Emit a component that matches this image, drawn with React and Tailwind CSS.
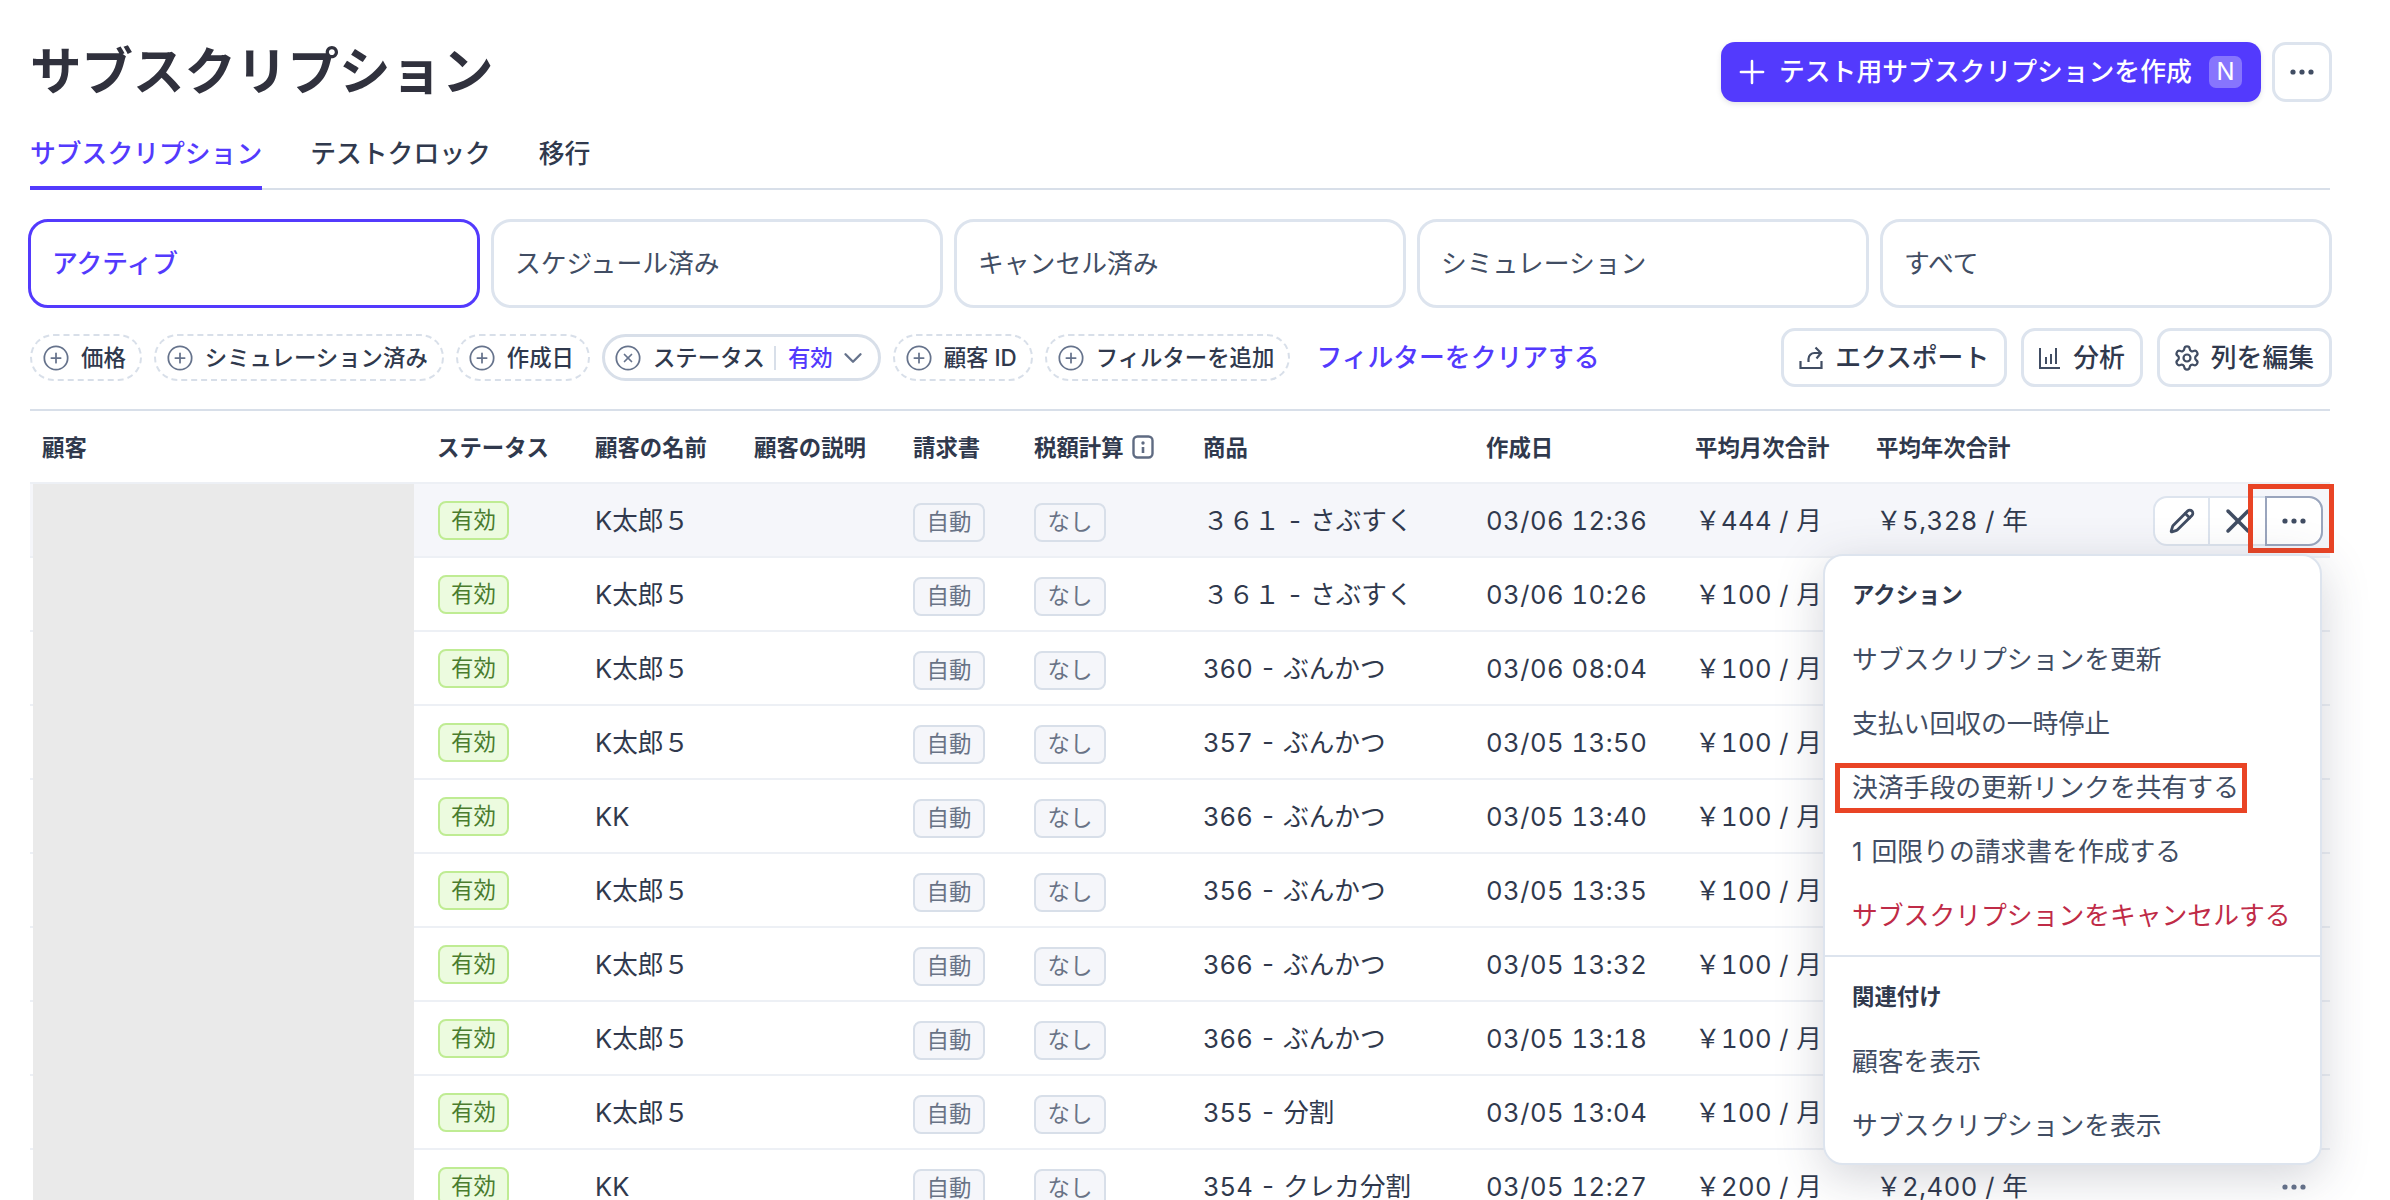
import React from "react";
import { ChevronDown, CirclePlus, CircleX, Pencil, Plus, Settings, X } from "lucide-react";

const COLS = "grid grid-cols-[408px_157px_159px_159px_121px_169px_283px_209px_181px_1fr]";

// the year column of rows 2-9 sits behind the open menu
const ROWS = [
  ["K太郎５", "３６１ - さぶすく", "03/06 12:36", "￥444", "￥5,328"],
  ["K太郎５", "３６１ - さぶすく", "03/06 10:26", "￥100"],
  ["K太郎５", "360 - ぶんかつ", "03/06 08:04", "￥100"],
  ["K太郎５", "357 - ぶんかつ", "03/05 13:50", "￥100"],
  ["KK", "366 - ぶんかつ", "03/05 13:40", "￥100"],
  ["K太郎５", "356 - ぶんかつ", "03/05 13:35", "￥100"],
  ["K太郎５", "366 - ぶんかつ", "03/05 13:32", "￥100"],
  ["K太郎５", "366 - ぶんかつ", "03/05 13:18", "￥100"],
  ["K太郎５", "355 - 分割", "03/05 13:04", "￥100"],
  ["KK", "354 - クレカ分割", "03/05 12:27", "￥200", "￥2,400"],
];

function Dots({ className }) {
  return (
    <svg viewBox="0 0 24 6" className={"h-[6px] w-[24px] " + (className || "")} fill="currentColor">
      <circle cx="3" cy="3" r="2.6" />
      <circle cx="12" cy="3" r="2.6" />
      <circle cx="21" cy="3" r="2.6" />
    </svg>
  );
}

function ShareIcon() {
  return (
    <svg width="24" height="24" viewBox="0 0 24 24" fill="none" stroke="currentColor" strokeWidth="2.2" className="text-[#414d63]">
      <path d="M1.5 15v7h21v-7" />
      <path d="M9.5 16v-3a6 6 0 0 1 6-6h6.5" />
      <path d="M16.5 1.5L22 7l-4.5 5.5" />
    </svg>
  );
}

function ChartIcon() {
  return (
    <svg width="22" height="24" viewBox="0 0 22 24" fill="none" stroke="currentColor" strokeWidth="2" className="text-[#414d63]">
      <path d="M1 2v20h20" />
      <path d="M7 11v7" />
      <path d="M12 8v10" />
      <path d="M17 2v16" />
    </svg>
  );
}

function InfoIcon() {
  return (
    <svg width="22" height="24" viewBox="0 0 22 24" fill="none" className="ml-[8px] text-[#5f6b82]">
      <rect x="1.5" y="1.5" width="19" height="21" rx="4" stroke="currentColor" strokeWidth="2.4" />
      <circle cx="11" cy="8" r="1.7" fill="currentColor" />
      <path d="M11 12v6" stroke="currentColor" strokeWidth="2.6" />
    </svg>
  );
}

function AddPill({ label }) {
  return (
    <div className="flex h-[47px] items-center gap-[11px] rounded-full border-2 border-dashed border-[#d8dfe9] pl-[10px] pr-[14px] text-[22.4px] font-medium text-[#30394d]">
      <CirclePlus size={28} strokeWidth={1.5} className="text-[#66738c]" />
      <span>{label}</span>
    </div>
  );
}

function ToolButton({ icon, label }) {
  return (
    <div className="flex h-[59px] items-center gap-[12px] rounded-[14px] border-[3px] border-[#dde4ee] px-[15px] text-[25.8px] font-medium text-[#30394d]">
      {icon}
      <span className="pt-[2px]">{label}</span>
    </div>
  );
}

function MenuItem({ children, className = "" }) {
  return <div className={"flex h-[64px] items-center pl-[27px] pt-[2px] text-[25.8px] text-[#414d63] " + className}>{children}</div>;
}

function MenuHeading({ children }) {
  return <div className="flex h-[64px] items-center pl-[27px] text-[22.4px] font-bold text-[#30394d]">{children}</div>;
}

function Row({ row, index }) {
  const first = index === 0;
  return (
    <div className={COLS + " h-[74px] items-center border-b-2 border-[#edf0f5] text-[25.6px] tabular-nums text-[#30394d] " + (first ? "bg-[#f5f6fa]" : "")}>
      <div className="ml-[3px] h-[74px] w-[381px] self-start bg-[#eaeaea]" />
      <div>
        <span className="-mt-[2px] flex h-[39px] w-[71px] items-center justify-center rounded-[8px] border-2 border-[#bfec93] bg-[#ecfbdf] text-[22.4px] text-[#4a7c2e]">有効</span>
      </div>
      <div>{row[0]}</div>
      <div />
      <div>
        <span className="mt-[2px] flex h-[39px] w-[72px] items-center justify-center rounded-[8px] border-2 border-[#d8dfe9] bg-[#f5f6fa] text-[22.4px] text-[#697386]">自動</span>
      </div>
      <div>
        <span className="mt-[2px] flex h-[39px] w-[72px] items-center justify-center rounded-[8px] border-2 border-[#d8dfe9] bg-[#f5f6fa] text-[22.4px] text-[#697386]">なし</span>
      </div>
      <div>{row[1]}</div>
      <div className="tracking-[0.5px]">{row[2]}</div>
      <div className="tracking-[0.4px]">{row[3]} / 月</div>
      <div className="flex items-center justify-between pr-[7px]">
        {row[4] ? <span className="tracking-[0.5px]">{row[4]} / 年</span> : <span />}
        {first && (
          <div className="flex h-[50px] w-[170px] rounded-[14px] border-2 border-[#dde4ee] bg-white text-[#414d63]">
            <div className="flex w-[55px] items-center justify-center border-r-2 border-[#dde4ee]">
              <Pencil size={26} strokeWidth={2.6} />
            </div>
            <div className="flex w-[55px] items-center justify-center">
              <X size={40} strokeWidth={2.1} />
            </div>
            <div className="-my-[2px] -mr-[2px] flex flex-1 items-center justify-center rounded-r-[14px] border-2 border-[#9aa5bd]">
              <Dots />
            </div>
          </div>
        )}
        {index === 9 && (
          <div className="flex w-[59px] justify-center text-[#66738c]">
            <Dots />
          </div>
        )}
      </div>
    </div>
  );
}

export default function App() {
  return (
    <div className="h-[1200px] overflow-hidden bg-white px-[30px] pt-[42px] pr-[60px] font-['Inter','Noto_Sans_CJK_JP',sans-serif] text-[#30394d]">
      <div className="-mr-[2px] flex h-[60px] items-center justify-between">
        <h1 className="text-[51.5px] font-bold text-[#30313d]">サブスクリプション</h1>
        <div className="flex items-center gap-[11px]">
          <div className="flex h-[60px] w-[540px] items-center rounded-[14px] bg-[#533afd] pl-[12px] pr-[19px] text-[25.8px] font-medium text-white shadow-[0_2px_5px_rgba(60,66,87,0.15)]">
            <Plus size={38} strokeWidth={1.6} />
            <span className="ml-[8px] flex-1">テスト用サブスクリプションを作成</span>
            <span className="flex h-[32px] w-[33px] items-center justify-center rounded-[7px] bg-white/30 text-[24px] font-normal">N</span>
          </div>
          <div className="flex h-[60px] w-[60px] items-center justify-center rounded-[14px] border-[3px] border-[#dde4ee] text-[#414d63]">
            <Dots className="w-[21px]" />
          </div>
        </div>
      </div>

      <div className="mt-[30px] flex h-[58px] gap-[48px] border-b-2 border-[#d8dfe9] pt-[2px] text-[25.8px] font-medium leading-[40px]">
        <div className="-mt-[2px] h-[58px] border-b-4 border-[#533afd] pt-[2px] text-[#533afd]">サブスクリプション</div>
        <div className="text-[#30394d]">テストクロック</div>
        <div className="text-[#30394d]">移行</div>
      </div>

      <div className="-mx-[2px] mt-[29px] grid grid-cols-5 gap-[11px] text-[25.8px]">
        <div className="flex h-[89px] items-center rounded-[20px] border-[3px] border-[#533afd] pl-[21px] pt-[2px] font-medium text-[#533afd]">アクティブ</div>
        <div className="flex h-[89px] items-center rounded-[20px] border-[3px] border-[#dde4ee] pl-[21px] pt-[2px] text-[#414d63]">スケジュール済み</div>
        <div className="flex h-[89px] items-center rounded-[20px] border-[3px] border-[#dde4ee] pl-[21px] pt-[2px] text-[#414d63]">キャンセル済み</div>
        <div className="flex h-[89px] items-center rounded-[20px] border-[3px] border-[#dde4ee] pl-[21px] pt-[2px] text-[#414d63]">シミュレーション</div>
        <div className="flex h-[89px] items-center rounded-[20px] border-[3px] border-[#dde4ee] pl-[21px] pt-[2px] text-[#414d63]">すべて</div>
      </div>

      <div className="-mr-[2px] mt-[20px] flex items-center justify-between">
        <div className="flex items-center gap-[12px]">
          <AddPill label="価格" />
          <AddPill label="シミュレーション済み" />
          <AddPill label="作成日" />
          <div className="flex h-[47px] items-center rounded-full border-[3px] border-[#d8dfe9] pl-[9px] pr-[10px] text-[22.4px] font-medium">
            <CircleX size={28} strokeWidth={1.5} className="text-[#66738c]" />
            <span className="ml-[11px]">ステータス</span>
            <span className="ml-[9px] mr-[12px] h-[24px] w-[2px] bg-[#d8dfe9]" />
            <span className="text-[#533afd]">有効</span>
            <ChevronDown size={30} strokeWidth={1.9} className="ml-[5px] text-[#66738c]" />
          </div>
          <AddPill label="顧客 ID" />
          <AddPill label="フィルターを追加" />
          <span className="ml-[14px] pt-[2px] text-[25.8px] font-medium text-[#533afd]">フィルターをクリアする</span>
        </div>
        <div className="flex items-center gap-[14px]">
          <ToolButton icon={<ShareIcon />} label="エクスポート" />
          <ToolButton icon={<ChartIcon />} label="分析" />
          <ToolButton icon={<Settings size={28} strokeWidth={1.9} className="-mx-[2px] text-[#414d63]" />} label="列を編集" />
        </div>
      </div>

      <div className="mt-[22px] border-t-2 border-[#d8dfe9]">
        <div className={COLS + " h-[73px] items-center border-b-2 border-[#edf0f5] pt-[2px] text-[22.4px] font-bold text-[#30394d]"}>
          <div className="pl-[12px]">顧客</div>
          <div className="-ml-[1px]">ステータス</div>
          <div>顧客の名前</div>
          <div>顧客の説明</div>
          <div>請求書</div>
          <div className="flex items-center">
            税額計算
            <InfoIcon />
          </div>
          <div>商品</div>
          <div>作成日</div>
          <div>平均月次合計</div>
          <div>平均年次合計</div>
        </div>

        <div className="relative">
          {ROWS.map((row, i) => (
            <Row key={i} row={row} index={i} />
          ))}

          <div className="absolute right-[-4px] top-0 h-[69px] w-[86px] border-[5px] border-[#e94425]" />

          <div className="absolute right-[8px] top-[70px] z-10 w-[499px] rounded-[20px] border-2 border-[#dde4ee] bg-white shadow-[0_12px_48px_rgba(60,66,87,0.22)]">
            <div className="pb-[8px] pt-[7px]">
              <MenuHeading>アクション</MenuHeading>
              <MenuItem>サブスクリプションを更新</MenuItem>
              <MenuItem>支払い回収の一時停止</MenuItem>
              <MenuItem className="relative">
                決済手段の更新リンクを共有する
                <div className="absolute left-[10px] top-[8px] h-[50px] w-[412px] border-[5px] border-[#e94425]" />
              </MenuItem>
              <MenuItem>
                <span>
                  <span className="mr-[9px]">1</span>回限りの請求書を作成する
                </span>
              </MenuItem>
              <MenuItem className="text-[#bf2b47]">サブスクリプションをキャンセルする</MenuItem>
            </div>
            <div className="border-t-2 border-[#dde4ee] pb-[6px] pt-[8px]">
              <MenuHeading>関連付け</MenuHeading>
              <MenuItem>顧客を表示</MenuItem>
              <MenuItem>サブスクリプションを表示</MenuItem>
            </div>
          </div>
        </div>
      </div>
    </div>
  );
}
